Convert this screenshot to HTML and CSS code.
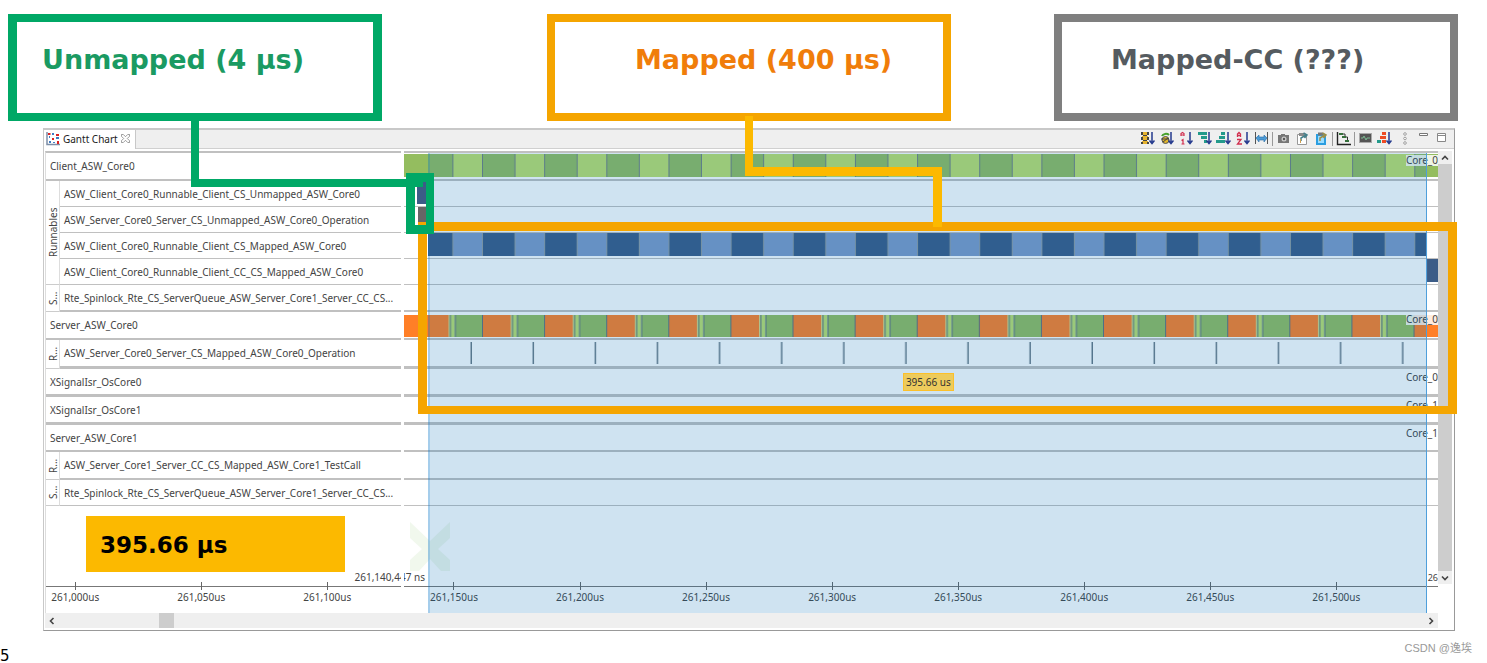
FILE: index.html
```html
<!DOCTYPE html>
<html lang="en">
<head>
<meta charset="utf-8">
<title>Gantt Chart</title>
<link rel="stylesheet" href="styles.css">
</head>
<body>
<main class="slide">
  <header class="callouts">
    <h2 class="callout callout-unmapped">Unmapped (4 µs)</h2>
    <h2 class="callout callout-mapped">Mapped (400 µs)</h2>
    <h2 class="callout callout-cc">Mapped-CC (???)</h2>
  </header>

  <section class="panel">
    <div class="tabbar">
      <div class="tab">
        <svg class="tab-icon" viewBox="0 0 14 14"><path d="M1 0v12.500h13" fill="none" stroke="#7d8fa8" stroke-width="1.500"/><path d="M2 1h2.500v2H2zM10 2h3v2h-3zM6 6h2v2H6zM11 9h2v3h-2z" fill="#d22"/><path d="M6 1h2v2H6zM10 5h3v2h-3zM3 9h2v2H3zM7 10h2v1H7zM3 4h1v2H3z" fill="#3f7cc4"/></svg>
        <span>Gantt Chart</span>
        <button class="tab-close" aria-label="Close tab"><svg viewBox="0 0 10 10"><path d="M.5.5h2L5 3 7.500.5h2v2L7 5l2.500 2.500v2h-2L5 7 2.500 9.500h-2v-2L3 5 .5 2.500z" fill="#fff" stroke="#777" stroke-width=".8"/></svg></button>
      </div>
      <div class="toolbar">
        <button aria-label="Sort by activation"><svg viewBox="0 0 15 15"><path d="M2 1h6v3H2zM2 5h6v4H2zM2 10h6v3H2z" fill="#e6b32e"/><path d="M1 1h2v3H1zM7 1h2v3H7zM1 6h2v3H1zM7 6h2v3H7zM1 11h2v2H1zM7 11h2v2H7zM3 4h4v1H3zM3 9h4v1H3z" fill="#444"/><use href="#down"/></svg></button>
        <button aria-label="Sort by owner"><svg viewBox="0 0 15 15"><path d="M3 5a4 3 0 0 1 7-1" fill="none" stroke="#47a12d" stroke-width="2"/><circle cx="6.500" cy="9" r="3.500" fill="#e0b52d" stroke="#555"/><path d="M2 8h8M4 11l5-4" stroke="#444"/><use href="#down"/></svg></button>
        <button aria-label="Sort by priority"><svg viewBox="0 0 15 15"><path d="M3 5V2.500l1.500-1L6 2.500V5M3 4h3M3.500 9.500L5 8.500V13M3.500 13h3" fill="none" stroke="#d12f4f" stroke-width="1.200"/><use href="#down"/></svg></button>
        <button aria-label="Sort descending"><svg viewBox="0 0 15 15"><path d="M1 1h9v3H1zM4 5h6v3H4zM7 9h3v3H7z" fill="#239a8b"/><use href="#down"/></svg></button>
        <button aria-label="Sort ascending"><svg viewBox="0 0 15 15"><path d="M5 1h4v3H5zM3 5h6v3H3zM0 9h9v3H0z" fill="#239a8b"/><use href="#down"/></svg></button>
        <button aria-label="Sort alphabetically"><svg viewBox="0 0 15 15"><path d="M2.500 6V3L4 1.500 5.500 3v3M2.500 4.500h3M2 8.500h4L2.500 13H7" fill="none" stroke="#d12f4f" stroke-width="1.300"/><use href="#down"/></svg></button>
        <button aria-label="Fit width"><svg viewBox="0 0 15 15"><path d="M1.500 1v12M13.500 1v12" stroke="#555"/><path d="M2 7l3-3v2h5V4l3 3-3 4V9H5v2z" fill="#4d9bd6" stroke="#246ca8" stroke-width=".6"/></svg></button>
        <i class="sep"></i>
        <button aria-label="Screenshot"><svg viewBox="0 0 15 15"><path d="M2 4h3V3h4v1h4v8H2z" fill="#777"/><circle cx="8" cy="8" r="2.500" fill="#ccc"/><circle cx="8" cy="8" r="1.200" fill="#555"/></svg></button>
        <button aria-label="Export view"><svg viewBox="0 0 15 15"><path d="M2.500 3.500h9v10h-9z" fill="#fff" stroke="#999"/><path d="M4 2h5v3H4z" fill="#8a8a8a"/><path d="M6 10V7l5-3M8.500 2L12 4 9.500 7" fill="none" stroke="#47808a" stroke-width="1.500"/><path d="M5 8h1v4H5z" fill="#d0a050"/></svg></button>
        <button aria-label="Export selection"><svg viewBox="0 0 15 15"><path d="M2 3h10v11H2z" fill="#2b9ee0"/><path d="M4 5h6v7H4z" fill="#9adcff"/><path d="M4 1.500h5v3H4z" fill="#777"/><path d="M6 10V7l5-3M8.500 2L12 4 9.500 7" fill="none" stroke="#9c8f48" stroke-width="1.500"/></svg></button>
        <i class="sep"></i>
        <button aria-label="Show dependencies"><svg viewBox="0 0 15 15"><path d="M1.500 1v12.500H15" fill="none" stroke="#222" stroke-width="1.400"/><path d="M3 2h4v2H3zM6 5h4v2H6zM9 9h4v2H9z" fill="#356f3b"/><path d="M7 3h2v2M10 6h1.500v3" fill="none" stroke="#333"/></svg></button>
        <i class="sep"></i>
        <button aria-label="Trace"><svg viewBox="0 0 15 15"><path d="M1 2h13v10H1z" fill="#aaa"/><path d="M2 3h11v8H2z" fill="#555"/><path d="M3 7h2l1-2 2 4 1-2h3" fill="none" stroke="#7ebc94"/></svg></button>
        <button aria-label="Sort by load"><svg viewBox="0 0 15 15"><path d="M5 1h4v3H5zM3 5h6v3H3z" fill="#ed4b24"/><path d="M0 9h4v3H0z" fill="#239a8b"/><path d="M5 9h4v3H5z" fill="#ed4b24"/><use href="#down"/></svg></button>
        <button aria-label="View menu"><svg viewBox="0 0 15 15"><g fill="#fff" stroke="#888" stroke-width=".8"><circle cx="9" cy="3" r="1.300"/><circle cx="9" cy="7.500" r="1.300"/><circle cx="9" cy="12" r="1.300"/></g></svg></button>
        <button aria-label="Minimize"><svg viewBox="0 0 15 15"><path d="M4.500 2.500h8v2h-8z" fill="#fff" stroke="#777"/></svg></button>
        <button aria-label="Maximize"><svg viewBox="0 0 15 15"><path d="M3.500 2.500h8v8h-8z" fill="#fff" stroke="#888"/><path d="M3 4.500h9" stroke="#888"/></svg></button>
      </div>
    </div>

    <div class="gantt">
      <div class="labels">
        <div class="row task">Client_ASW_Core0</div>
        <div class="group">
          <span class="side">Runnables</span>
          <div>
            <div class="row run">ASW_Client_Core0_Runnable_Client_CS_Unmapped_ASW_Core0</div>
            <div class="row run">ASW_Server_Core0_Server_CS_Unmapped_ASW_Core0_Operation</div>
            <div class="row run">ASW_Client_Core0_Runnable_Client_CS_Mapped_ASW_Core0</div>
            <div class="row run">ASW_Client_Core0_Runnable_Client_CC_CS_Mapped_ASW_Core0</div>
          </div>
        </div>
        <div class="group">
          <span class="side">S...</span>
          <div><div class="row spin">Rte_Spinlock_Rte_CS_ServerQueue_ASW_Server_Core1_Server_CC_CS...</div></div>
        </div>
        <div class="row task">Server_ASW_Core0</div>
        <div class="group">
          <span class="side">R...</span>
          <div><div class="row op">ASW_Server_Core0_Server_CS_Mapped_ASW_Core0_Operation</div></div>
        </div>
        <div class="row isr">XSignalIsr_OsCore0</div>
        <div class="row isr">XSignalIsr_OsCore1</div>
        <div class="row spin">Server_ASW_Core1</div>
        <div class="group">
          <span class="side">R...</span>
          <div><div class="row task">ASW_Server_Core1_Server_CC_CS_Mapped_ASW_Core1_TestCall</div></div>
        </div>
        <div class="group">
          <span class="side">S...</span>
          <div><div class="row run">Rte_Spinlock_Rte_CS_ServerQueue_ASW_Server_Core1_Server_CC_CS...</div></div>
        </div>
        <div class="foot">
          <strong class="duration">395.66 µs</strong>
          <div class="axis axis-labels"><span>261,000us</span><span>261,050us</span><span>261,100us</span></div>
        </div>
      </div>

      <div class="divider"></div>

      <div class="plot">
        <div class="row task"><svg class="lane" viewBox="0 0 1034 23" preserveAspectRatio="none"><rect width="49" height="23" fill="#94bd5f"/><rect x="48" width="986" height="23" fill="url(#clientBars)"/></svg><span class="core core-over">Core_0</span></div>
        <div class="row run"><svg class="lane" viewBox="0 0 1034 23" preserveAspectRatio="none"><rect x="13" width="11" height="23" fill="#3c5c87"/></svg></div>
        <div class="row run"><svg class="lane" viewBox="0 0 1034 23" preserveAspectRatio="none"><rect x="14" width="9" height="23" fill="#666"/></svg></div>
        <div class="row run"><svg class="lane" viewBox="0 0 1034 23" preserveAspectRatio="none"><rect x="24" width="999" height="23" fill="url(#callBars)"/></svg></div>
        <div class="row run"><svg class="lane" viewBox="0 0 1034 23" preserveAspectRatio="none"><rect x="1023" width="11" height="23" fill="#3c5c87"/></svg></div>
        <div class="row spin"></div>
        <div class="row task server"><svg class="lane" viewBox="0 0 1034 22" preserveAspectRatio="none"><rect width="1034" height="22" fill="url(#serverBars)"/><rect width="42" height="22" fill="#ff7f27"/></svg><span class="core core-over">Core_0</span></div>
        <div class="row op"><svg class="lane" viewBox="0 0 1034 23" preserveAspectRatio="none"><rect x="60" width="974" height="23" fill="url(#opTicks)"/></svg></div>
        <div class="row isr"><span class="core">Core_0</span></div>
        <div class="row isr"><span class="core">Core_1</span></div>
        <div class="row spin"><span class="core">Core_1</span></div>
        <div class="row task"></div>
        <div class="row run"></div>
        <div class="foot">
          <svg class="mark" viewBox="0 0 40 50"><path d="M0 0l20 19L40 0v16L28 27 40 38v11h-9L20 37 9 49H0V38l12-11L0 16z" fill="#f1f8ed"/></svg>
          <div class="axis axis-plot"><span>261,150us</span><span>261,200us</span><span>261,250us</span><span>261,300us</span><span>261,350us</span><span>261,400us</span><span>261,450us</span><span>261,500us</span></div>
        </div>
        <div class="selection"></div>
        <span class="tip">395.66 us</span>
        <span class="stamp-end">26</span>
      </div>

      <div class="vscroll">
        <button aria-label="Scroll up"><svg viewBox="0 0 10 10"><path d="M2 6.500l3-3 3 3" fill="none" stroke="#444" stroke-width="1.600"/></svg></button>
        <i class="vthumb"></i>
        <button aria-label="Scroll down"><svg viewBox="0 0 10 10"><path d="M2 3.500l3 3 3-3" fill="none" stroke="#444" stroke-width="1.600"/></svg></button>
      </div>
      <span class="stamp-start">261,140,447 ns</span>
    </div>

    <div class="hscroll">
      <button aria-label="Scroll left"><svg viewBox="0 0 10 10"><path d="M6.500 2l-3 3 3 3" fill="none" stroke="#444" stroke-width="1.600"/></svg></button>
      <div class="htrack"><i class="hthumb"></i></div>
      <button aria-label="Scroll right"><svg viewBox="0 0 10 10"><path d="M3.500 2l3 3-3 3" fill="none" stroke="#444" stroke-width="1.600"/></svg></button>
    </div>
  </section>

  <footer class="footer">
    <span class="page-number">5</span>
    <span class="credit">CSDN @逸埃</span>
  </footer>

  <svg class="notes" viewBox="0 0 1487 663" preserveAspectRatio="none">
    <path d="M418 222h1039v192H418zM427 231v175h1021V231z" fill="#f5a500" fill-rule="evenodd"/>
    <path d="M745 116h8v51h189v60h-9v-51H745z" fill="#fcb900"/>
    <path d="M406 173h28v61h-28zM415 187v38h11v-43h-3v5z" fill="#00a866" fill-rule="evenodd"/>
    <path d="M191 120h8v59h210v8H191z" fill="#00a866"/>
  </svg>

  <svg class="defs" aria-hidden="true">
    <defs>
      <g id="down"><path d="M12 1v11M9.500 9.500L12 12.500l2.500-3" fill="none" stroke="#253a8e" stroke-width="1.500"/></g>
      <pattern id="clientBars" x="78" width="62.150" height="23" patternUnits="userSpaceOnUse"><rect width="33" height="23" fill="#94bd5f"/><rect x="33" width="30" height="23" fill="#bedf6d"/><path d="M0 0h1v23H0zM32.500 0h1v23h-1z" fill="#708080"/></pattern>
      <pattern id="callBars" x="78" width="62.150" height="23" patternUnits="userSpaceOnUse"><rect width="33" height="23" fill="#3c5c87"/><rect x="33" width="30" height="23" fill="#7e9bc8"/><path d="M0 0h1v23H0zM32.500 0h1v23h-1z" fill="#909ba0"/></pattern>
      <pattern id="serverBars" x="78" width="62.100" height="22" patternUnits="userSpaceOnUse"><rect width="29" height="22" fill="#ff7f27"/><rect x="29" width="6" height="22" fill="#bedf6d"/><rect x="35" width="28" height="22" fill="#94bd5f"/><path d="M0 0h1v22H0zM30 0h1v22h-1zM35 0h1v22h-1z" fill="#5f707c"/></pattern>
      <pattern id="opTicks" x="66" width="62.100" height="23" patternUnits="userSpaceOnUse"><path d="M.5 1H2v22H.5z" fill="#687884"/></pattern>
    </defs>
  </svg>
</main>
</body>
</html>
```

FILE: styles.css
```css
* { box-sizing: border-box; }
body {
  margin: 0;
  background: #fff;
  color: #444;
  font: 10px/12px "Noto Sans", "Open Sans", sans-serif;
}
button { padding: 0; border: 0; background: none; font: inherit; display: grid; place-items: center; }
svg { display: block; }
.slide { position: relative; overflow: hidden; }
.defs { position: absolute; width: 0; height: 0; }
.notes { position: absolute; z-index: 2; inset: 0; width: 100%; height: 100%; pointer-events: none; }

.callouts {
  display: grid;
  grid-template-columns: 8fr 374fr 165fr 404fr 103fr 404fr 29fr;
  padding-top: 14px;
}
.callout {
  margin: 0;
  min-height: 107px;
  padding-top: 22px;
  border: 8px solid;
  font: bold 27px/32px Verdana, "DejaVu Sans", sans-serif;
  white-space: nowrap;
}
.callout-unmapped { grid-column: 2; padding-left: 25px; color: #1a9a62; border-color: #00a866; border-width: 8px 9px; }
.callout-mapped { grid-column: 4; padding-left: 80px; color: #f07d0a; border-color: #f5a500; }
.callout-cc { grid-column: 6; padding-left: 49px; color: #555b60; border-color: #7f7f7f; }

.panel {
  margin: 7px 2.150% 0 2.890%;
  padding: 0 2px 2px 1px;
  border: 1px solid #999;
  border-top: 2px solid #c8c8c8;
  border-left-color: #c8c8c8;
}
.tabbar {
  display: flex;
  justify-content: space-between;
  height: 19px;
  margin: 0 -2px 2px -1px;
  border-bottom: 1px solid #d0d0d0;
  background: #efefef;
}
.tab {
  display: flex;
  align-items: center;
  gap: 3px;
  height: 19px;
  padding: 0 5px 2px 2px;
  border-right: 1px solid #c8c8c8;
  background: #fff;
  color: #222;
}
.tab-icon { width: 14px; height: 14px; }
.tab-close, .tab-close svg { width: 9px; height: 9px; }
.toolbar { display: flex; align-items: center; gap: 4px; padding: 0 5px 1px 0; }
.toolbar button, .toolbar svg { width: 15px; height: 15px; }
.sep { width: 1px; height: 14px; margin: 0 -1px; background: #999; }

.gantt {
  position: relative;
  display: grid;
  grid-template-columns: 356fr 3fr 1034fr 14fr;
}
.labels, .plot { min-width: 0; border-top: 2px solid #c0c0c0; overflow: hidden; }
.labels { border-left: 1px solid #ddd; }
.plot { position: relative; }
.row {
  position: relative;
  display: flex;
  align-items: center;
  height: 28px;
  padding-left: 4px;
  border-bottom: 2px solid #c0c0c0;
  white-space: nowrap;
}
.plot .row { padding-left: 0; align-items: flex-start; padding-top: 1px; }
.run { height: 26px; border-bottom-width: 1px; }
.spin { height: 27px; }
.op { height: 29px; border-bottom-width: 3px; }
.isr { height: 28px; border-bottom-width: 3px; }
.plot .server { padding-top: 3px; }
.plot .run { padding-top: 0; }
.group { display: grid; grid-template-columns: 14px minmax(0, 1fr); }
.side {
  display: grid;
  place-items: center;
  writing-mode: vertical-rl;
  transform: rotate(180deg);
  border-left: 1px solid #ddd;
  border-top: 1px solid #ccc;
}
.lane { width: 100%; height: 23px; }
.server .lane { height: 22px; }
.core { position: absolute; right: 0; top: 2px; }
.core-over { background: rgba(255, 255, 255, .85); line-height: 11px; }

.foot { display: flex; flex-direction: column; justify-content: space-between; height: 107px; }
.duration {
  margin: 10px 15.800% 0 11.300%;
  padding: 15px 14px 13px;
  background: #fcb900;
  color: #000;
  font: bold 23px/28px Verdana, "DejaVu Sans", sans-serif;
  white-space: nowrap;
}
.mark { width: 40px; height: 50px; margin: 16px 0 0 6px; }
.axis {
  display: flex;
  height: 31px;
  background: linear-gradient(#777, #777) 0 4px / 100% 1px no-repeat;
}
.axis span { flex: none; text-align: center; }
.axis span::before { content: ""; display: block; width: 1px; height: 8px; margin: 0 auto 1px; background: #666; }
.axis-labels span { width: 35.500%; }
.axis-labels span:first-child { margin-left: -9.500%; }
.axis-plot span { width: 12.190%; }
.axis-plot span:first-child { margin-left: -1.260%; }

.selection {
  position: absolute;
  top: -2px;
  bottom: 0;
  left: 2.350%;
  right: 1.050%;
  border-left: 2px solid rgba(0, 120, 215, .2);
  border-right: 1px solid #4f9fdb;
  background: rgba(0, 108, 181, .19);
}
.tip {
  position: absolute;
  left: 48.250%;
  top: 220px;
  padding: 2px;
  border: 1px solid #fcc02a;
  background: #edcb5c;
  color: #333;
}
.stamp-start { position: absolute; left: 22%; top: 420px; }
.stamp-end { position: absolute; right: 0; top: 419px; font-size: 9px; }
.divider { position: relative; z-index: 1; background: #fff; }

.vscroll { display: flex; flex-direction: column; padding-bottom: 29px; }
.vscroll button, .hscroll button { flex: none; width: 100%; height: 13px; background: #efefef; }
.vscroll svg, .hscroll svg { width: 10px; height: 10px; }
.vthumb { flex: 1; background: #cdcdcd; }
.hscroll { display: flex; margin-right: 14px; background: #efefef; }
.hscroll button { width: 14px; height: 15px; }
.htrack { flex: 1; display: flex; }
.hthumb { width: 1.100%; margin-left: 7.350%; background: #cdcdcd; }

.footer { display: flex; justify-content: space-between; align-items: center; height: 32px; padding: 2px 15px 0 0; }
.page-number { padding-top: 16px; color: #000; font: 15px/16px Verdana, "DejaVu Sans", sans-serif; }
.credit { color: #999; font: 11px/16px "Liberation Sans", "Noto Sans CJK SC", sans-serif; }
```
